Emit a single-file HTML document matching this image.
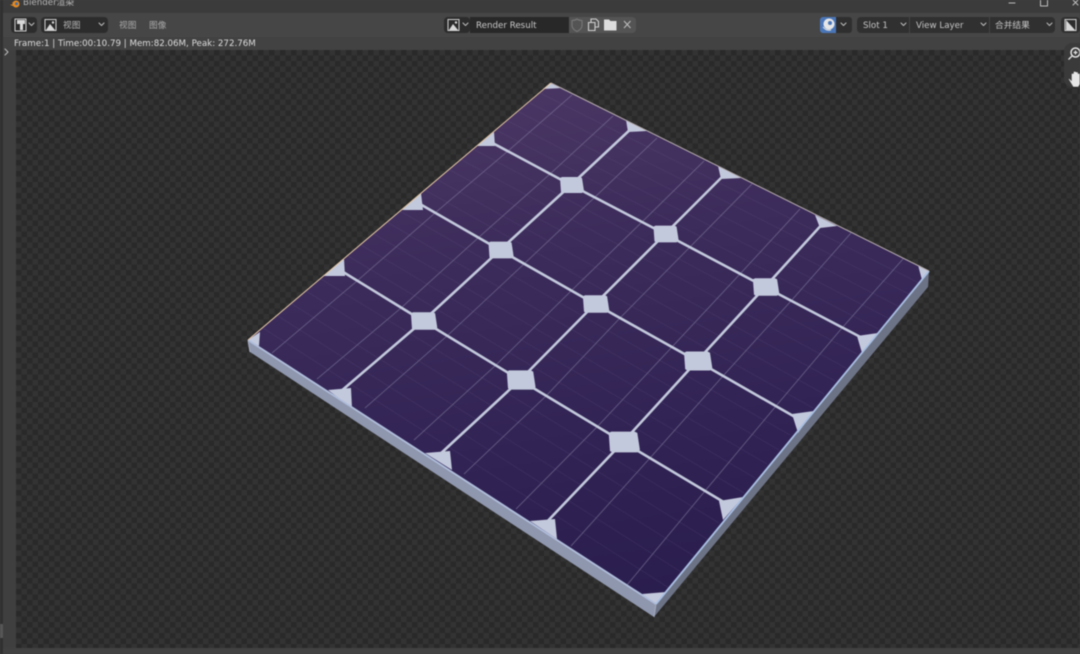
<!DOCTYPE html>
<html lang="zh"><head><meta charset="utf-8"><title>Blender渲染</title>
<style>
html,body{margin:0;padding:0;background:#404040}
#r{position:relative;width:1080px;height:654px;overflow:hidden;background:#414141;font-family:"DejaVu Sans","Noto Sans CJK SC",sans-serif;color:#c4c4c4;font-size:8.700px;filter:blur(.5px)}
.a{position:absolute}
.t{position:absolute;white-space:nowrap;line-height:12px}
.b{position:absolute;background:#2c2c2c;border-radius:4px;height:20px;top:15px}
svg{position:absolute;left:0;top:0;overflow:visible}
</style></head><body><div id="r">
<div class="a" style="left:0;top:0;width:1080px;height:13px;background:#3b3b3b"></div>
<div class="a" style="left:0;top:13px;width:1080px;height:24px;background:#464646"></div>
<div class="a" style="left:0;top:37px;width:1080px;height:13px;background:#424242"></div>
<div class="a" style="left:0;top:0;width:3px;height:654px;background:#303030"></div>
<div class="a" style="left:3px;top:50px;width:13px;height:598px;background:#3f3f3f"></div>
<div class="a" style="left:16px;top:50px;width:1064px;height:598px;background-color:#292929;background-image:conic-gradient(#333333 25%,#292929 0 50%,#333333 0 75%,#292929 0);background-size:11px 11px"></div>
<div class="a" style="left:0;top:624px;width:3px;height:14px;background:#565656"></div>

<div class="t" style="left:23px;top:-3px;font-size:8.700px;color:#b5b5b5">Blender渲染</div>

<div class="b" style="left:11px;top:17px;width:26px;height:16px"></div>
<div class="b" style="left:41px;top:17px;width:67px;height:16px"></div>
<div class="t" style="left:63px;top:20px;color:#b5b5b5">视图</div>
<div class="t" style="left:119px;top:20px;color:#a8a8a8">视图</div>
<div class="t" style="left:149px;top:20px;color:#a8a8a8">图像</div>
<div class="t" style="left:14px;top:38px;font-size:8.700px;color:#dcdcdc">Frame:1 | Time:00:10.79 | Mem:82.06M, Peak: 272.76M</div>

<div class="b" style="left:444px;top:17px;width:26px;height:16px"></div>
<div class="a" style="left:470px;top:17px;width:99px;height:16px;background:#282828"></div>
<div class="t" style="left:476px;top:20px;font-size:8.700px;color:#c8c8c8">Render Result</div>
<div class="a" style="left:569px;top:17px;width:67px;height:16px;background:#545454;border-radius:0 4px 4px 0"></div>

<div class="a" style="left:820px;top:17px;width:16px;height:16px;background:#4a76b8;border-radius:3px 0 0 3px"></div>
<div class="a" style="left:836px;top:17px;width:16px;height:16px;background:#2f2f2f;border-radius:0 3px 3px 0"></div>
<div class="b" style="left:857px;top:17px;width:198px;height:16px;background:#303030"></div>
<div class="a" style="left:909px;top:17px;width:1px;height:16px;background:#444"></div>
<div class="a" style="left:989px;top:17px;width:1px;height:16px;background:#444"></div>
<div class="t" style="left:863px;top:20px">Slot 1</div>
<div class="t" style="left:916px;top:20px">View Layer</div>
<div class="t" style="left:995px;top:20px">合并结果</div>
<div class="b" style="left:1061px;top:17px;width:19px;height:16px;background:#303030"></div>
<div class="a" style="left:1064px;top:43px;width:16px;height:44px;background:#3a3a3a;border-radius:8px 0 0 8px"></div>

<svg width="1080" height="654" viewBox="0 0 1080 654">
<defs>
<linearGradient id="g" gradientUnits="userSpaceOnUse" x1="560" y1="84" x2="640" y2="604">
<stop offset="0" stop-color="#4a3663"/><stop offset=".3" stop-color="#3c2c5b"/><stop offset=".65" stop-color="#322455"/><stop offset="1" stop-color="#2a1e4e"/></linearGradient>
<polygon id="n" points="-11,-7 -9,-8 9,-8 11,-7 13,6 11,8 -8,8 -10,7"/>
</defs>

<!-- Blender logo -->
<circle cx="16" cy="4" r="3.500" fill="#e88a1e"/><circle cx="16.500" cy="3.800" r="1.500" fill="#3d6ea8"/><path d="M12.500 6L10 4.500h3.500L12 2.500h3" fill="#e88a1e"/>

<!-- UI icons -->
<g fill="none" stroke="#bdbdbd" stroke-width="1" stroke-linecap="round" stroke-linejoin="round">
<path d="M29 23l2.500 2.500L34 23M99 23l2.500 2.500L104 23M463 23l2.500 2.500L468 23M841 23l2.500 2.500L846 23M901 23l2.500 2.500L906 23M981 23l2.500 2.500L986 23M1047 23l2.500 2.500L1052 23M5 49l3 3-3 3M1009 3h6M1040.500 0v6h7v-6M1073 0l5 5m0-5l-5 5"/>
</g>
<g fill="#d8d8d8"><rect x="15" y="19" width="11" height="12" fill="#2c2c2c" stroke="#cfcfcf"/><path d="M17 20h8v4h-2v6h-3v-6h-3z"/></g>
<g><rect x="45" y="19.500" width="11" height="11" fill="#2c2c2c" stroke="#d0d0d0"/><path d="M46 30l4-6 5 6z" fill="#d8d8d8"/><circle cx="53" cy="22.500" r="1.200" fill="#d8d8d8"/></g>
<g><rect x="448" y="19.500" width="11" height="11" fill="#2c2c2c" stroke="#d0d0d0"/><path d="M449 30l4-6 5 6z" fill="#d8d8d8"/><circle cx="456" cy="22.500" r="1.200" fill="#d8d8d8"/></g>
<g><rect x="1065" y="19.500" width="11" height="11" fill="#2c2c2c" stroke="#d0d0d0"/><path d="M1066 20l9 10h-9z" fill="#d8d8d8"/></g>
<g fill="none" stroke="#a8a8a8" stroke-width="1.100"><path d="M572 20.500q3 0 5-1.500 2 1.500 5 1.500v5q0 3.500-5 6-5-2.500-5-6z" stroke="#777"/><path d="M588.500 22.500h6.500v8h-6.500zM591 22v-3h5l2.500 2.500v5.500h-3" stroke="#cfcfcf"/><path d="M624 21l6.500 7m0-7l-6.500 7" stroke="#bbb"/></g>
<path d="M604 19.500h5l1.500 1.500h6v9.500h-12.500z" fill="#dcdcdc"/>
<g><circle cx="829" cy="24" r="5.500" fill="#e6e6e6"/><circle cx="830" cy="23" r="2" fill="#4a76b8"/><path d="M823 27q3 4 8 3" fill="none" stroke="#e6e6e6"/></g>
<g fill="none" stroke="#e2e2e2" stroke-width="1.500"><circle cx="1075.500" cy="52.500" r="4.500"/><path d="M1072 56l-3.500 3.500M1075.500 50.500v4M1073.500 52.500h4" stroke-width="1.300"/></g>
<path d="M1069 79l3 3v-8h1.500v5h.5v-7h1.500v7h.5v-6.500h1.500v6.500h.5v-5h1.500v10l-1.500 2.500h-4.500z" fill="#e6e6e6" stroke="#e6e6e6" stroke-width=".6"/>

<!-- side faces -->
<polygon points="248,340 656,604 654,617 250,352" fill="#8f97ae"/>
<polygon points="656,604 929,271 928,287 654,617" fill="#6d7386"/>
<polygon points="551,83 929,271 656,604 248,340" fill="url(#g)"/>

<!-- faint finger lines -->
<g stroke="#8a7aa8" stroke-opacity=".13" stroke-width=".8">
<path d="M540 93L919 283M530 103L909 294M519 112L898 306M508 121L888 318M498 131L878 329"/>
<path d="M475 150L857 354M462 160L846 368M450 170L835 381M438 180L824 394M425 190L813 408"/>
<path d="M400 211L790 435M387 222L779 450M374 234L767 464M361 245L755 478M348 256L744 493"/>
<path d="M321 279L719 523M306 291L707 539M292 304L694 556M278 316L681 572M263 328L669 588"/>
</g>
<!-- busbars -->
<g fill="none" stroke="#7d7499" stroke-width="1" stroke-opacity=".6">
<polyline points="572,95 508,151 435,213 357,281 272,353"/>
<polyline points="613,116 550,174 478,238 401,308 317,379"/>
<polyline points="657,138 595,197 524,264 447,336 365,408"/>
<polyline points="704,161 642,222 571,291 496,365 414,440"/>
<polyline points="752,184 690,247 620,318 546,396 464,474"/>
<polyline points="800,209 740,274 672,347 597,427 516,509"/>
<polyline points="851,233 791,301 723,376 650,458 571,546"/>
<polyline points="903,259 842,328 776,406 705,491 627,585"/>
</g>
<!-- grid lines -->
<g fill="none" stroke="#c3c9dc" stroke-width="2.600">
<polyline points="487,140 571,185 665,234 765,287 868,341"/>
<polyline points="413,200 500,250 595,304 697,361 802,421"/>
<polyline points="335,267 423,321 520,380 623,442 732,507"/>
<polyline points="634,126 571,185 500,250 423,321 340,392"/>
<polyline points="727,172 665,234 595,304 520,380 438,456"/>
<polyline points="825,221 765,287 697,361 623,442 542,527"/>
</g>
<!-- nodes -->
<g fill="#c3c9dc">
<use href="#n" transform="translate(571,185) scale(1)"/>
<use href="#n" transform="translate(665,234) scale(1.050)"/>
<use href="#n" transform="translate(765,287) scale(1.100)"/>
<use href="#n" transform="translate(500,250) scale(1.050)"/>
<use href="#n" transform="translate(595,304) scale(1.100)"/>
<use href="#n" transform="translate(697,361) scale(1.180)"/>
<use href="#n" transform="translate(423,321) scale(1.100)"/>
<use href="#n" transform="translate(520,380) scale(1.200)"/>
<use href="#n" transform="translate(623,442) scale(1.300)"/>
<!-- edge triangles -->
<polygon points="550,83 562,88 543,89"/>
<polygon points="626,120 647,131 628,132"/>
<polygon points="718,166 741,178 721,179"/>
<polygon points="815,215 837,226 820,228"/>
<polygon points="918,265 929,271 922,280"/>
<polygon points="494,132 495,146 477,146"/>
<polygon points="421,193 423,210 402,210"/>
<polygon points="344,259 345,276 323,276"/>
<polygon points="260,332 259,346 248,340"/>
<polygon points="857,336 878,333 862,353"/>
<polygon points="792,414 814,411 798,433"/>
<polygon points="719,501 743,497 723,520"/>
<polygon points="328,390 351,388 352,408"/>
<polygon points="425,453 450,451 452,470"/>
<polygon points="530,521 555,519 557,539"/>
<polygon points="642,594 666,592 656,604"/>
</g>
<!-- frame edges -->
<path d="M248 340L656 604" stroke="#b0bedb" stroke-width="1.800" fill="none"/>
<path d="M656 604L929 271" stroke="#a9c0e4" stroke-width="1.800" fill="none"/>
<path d="M551 83L929 271" stroke="#b8aeb0" stroke-width="1" fill="none"/>
<path d="M551 83L248 340" stroke="#e6c8a4" stroke-width="1" fill="none"/>
<path d="M248 340L250 352" stroke="#a8aec2" stroke-width="1" fill="none"/>
<path d="M656 604L654 617" stroke="#a4aabd" stroke-width="1" fill="none"/>
</svg>
</div></body></html>
